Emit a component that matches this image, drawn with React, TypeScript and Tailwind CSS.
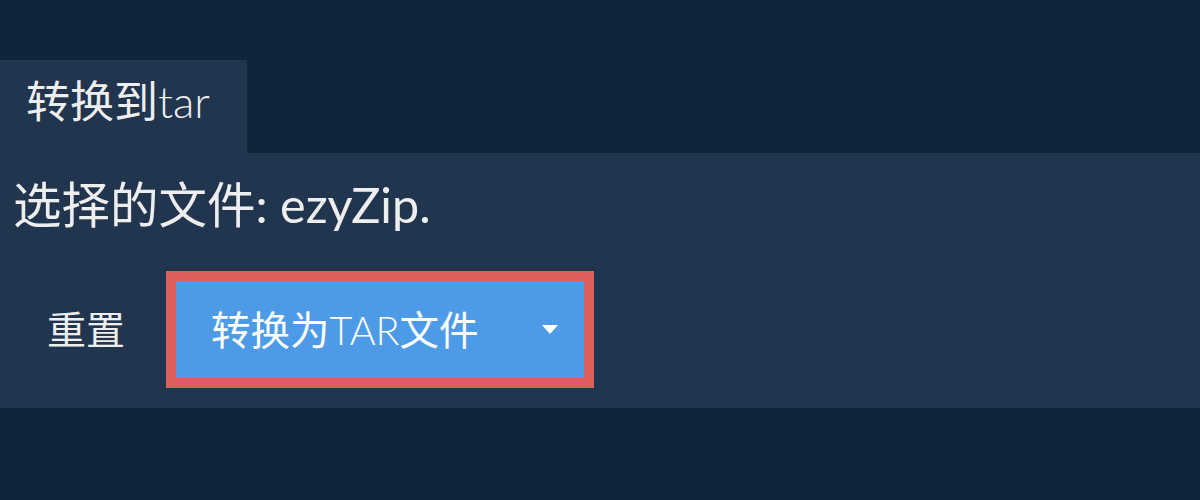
import React from 'react';

const fontStack = 'font-[Lato,"Noto_Sans_CJK_SC",sans-serif]';

const App: React.FC = () => {
  return (
    <div className={`h-[500px] w-full bg-[#10243a] pt-[60px] text-[#eeeeee] ${fontStack}`}>
      {/* Tab */}
      <div className="flex h-[93px] w-[247px] items-center bg-[#21364e] pb-[12px] pl-[26px] text-[44px]">
        <span>转换到</span>
        <span className="font-light">tar</span>
      </div>

      {/* Panel */}
      <div className="flex h-[255px] flex-col bg-[#21364e] pl-[13px]">
        <h2 className="mt-[22px] text-[48.5px] leading-[58px]">选择的文件: ezyZip.</h2>
        <div className="mt-[38px] flex items-center">
          <button className="ml-[34px] text-[39px] text-[#eeeeee]">重置</button>
          <div className="ml-[41px] border-[10px] border-[#dc5f5c]">
            <button className="flex h-[97px] w-[408px] items-center bg-[#4d9be6] pl-[35px] pr-[26px] text-[39.5px] text-white">
              <span>
                转换为<span className="font-light">TAR</span>文件
              </span>
              <svg className="ml-auto" width="16" height="9" viewBox="0 0 16 9">
                <path d="M0 0 L16 0 L8 9 Z" fill="#ffffff" />
              </svg>
            </button>
          </div>
        </div>
      </div>
    </div>
  );
};

export default App;
